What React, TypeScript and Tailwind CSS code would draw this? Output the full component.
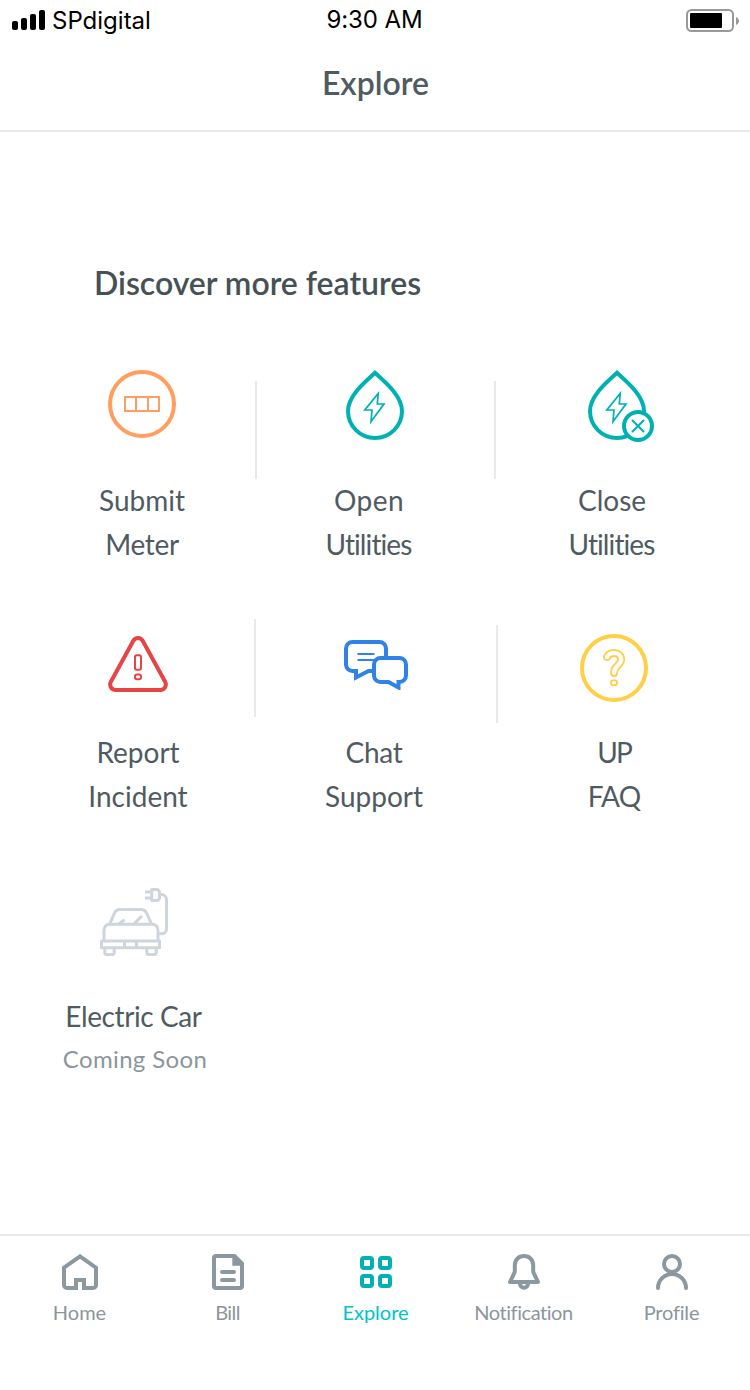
import type { ReactNode } from 'react';
import clsx from 'clsx';

interface LabelLine {
    text: string;
    className?: string;
}

interface FeatureProps {
    icon: ReactNode;
    iconClassName: string;
    lines: LabelLine[];
    className: string;
}

function MeterIcon() {
    return (
        <svg width="68" height="68" viewBox="0 0 68 68" fill="none" stroke="#ff9e5e">
            <circle cx="34" cy="34" r="32" strokeWidth="4" />
            <path d="M17 27h34v14H17zM28 27v14M40 27v14" strokeWidth="2" />
        </svg>
    );
}

function DropShape() {
    return (
        <>
            <path
                d="M29 2.8C21 10.500 2 25 2 41a27 27 0 0 0 54 0C56 25 37 10.500 29 2.800Z"
                strokeWidth="4"
            />
            <path d="M32.2 23.5 31.3 34H38L25 51.5 26 40H18.8Z" strokeWidth="1.7" />
        </>
    );
}

function DropIcon() {
    return (
        <svg width="58" height="70" viewBox="0 0 58 70" fill="none" stroke="#00b1b4">
            <DropShape />
        </svg>
    );
}

function DropCloseIcon() {
    return (
        <svg width="66" height="72" viewBox="0 0 66 72" fill="none" stroke="#00b1b4">
            <DropShape />
            <circle cx="50" cy="56" r="14" strokeWidth="4" fill="#fff" />
            <path d="m44.5 50.5 11 11M55.5 50.5l-11 11" strokeWidth="2" strokeLinecap="round" />
        </svg>
    );
}

function WarningIcon() {
    return (
        <svg width="60" height="56" viewBox="0 0 60 56" fill="none" stroke="#e64545">
            <path
                d="M25.2 5 3 45.5C.8 49.6 3.4 54 7.6 54h44.8c4.2 0 6.8-4.4 4.6-8.5L34.8 5c-2.2-4-7.4-4-9.6 0Z"
                strokeWidth="4"
            />
            <rect x="27" y="19.2" width="6" height="14.6" rx="1.8" strokeWidth="2" />
            <rect x="27" y="38.6" width="6" height="4.6" rx="2" strokeWidth="2" />
        </svg>
    );
}

function ChatIcon() {
    return (
        <svg width="64" height="50" viewBox="0 0 64 50" fill="none" stroke="#2f83e4" strokeWidth="4">
            <path d="M42 18V8.500a6.500 6.500 0 0 0-6.500-6.500H8.500A6.500 6.500 0 0 0 2 8.500v16A6.500 6.500 0 0 0 8.500 31H12v6.500L24.500 31H30" />
            <path d="M13.500 14h17M13.500 20H30" strokeWidth="2" />
            <path d="M36.500 18h19a6.500 6.500 0 0 1 6.500 6.500v11a6.500 6.500 0 0 1-6.500 6.500h-1v5.500L44.500 42h-8a6.500 6.500 0 0 1-6.500-6.500v-11a6.500 6.500 0 0 1 6.500-6.500Z" fill="#fff" />
        </svg>
    );
}

function QuestionIcon() {
    const hook = 'M27 23C28.500 20 31 19 34 19c4.400 0 7.200 2.700 7.200 6.500C41.200 31.500 34 31.500 34 39';
    return (
        <svg width="68" height="68" viewBox="0 0 68 68" fill="none" stroke="#ffcf48">
            <circle cx="34" cy="34" r="32" strokeWidth="4" />
            <g strokeLinecap="round">
                <path d={hook} strokeWidth="7.8" />
                <path d={hook} strokeWidth="4.2" stroke="#fff" />
            </g>
            <rect x="31" y="46.3" width="6" height="4.8" rx="2.2" strokeWidth="1.8" />
        </svg>
    );
}

function CarIcon() {
    return (
        <svg width="68" height="68" viewBox="0 0 68 68" fill="none" stroke="#ced5dd" strokeWidth="3" strokeLinejoin="round">
            <path d="M1.500 53h58v6.800h-58zM24.500 53v7M36.500 53v7" />
            <path d="M4.800 60v4.500a2 2 0 0 0 2 2h5.400a2 2 0 0 0 2-2V60M46.800 60v4.500a2 2 0 0 0 2 2h5.400a2 2 0 0 0 2-2V60" />
            <path d="M4 53V42.500c0-3.500 2-6.200 6-6.200h42c4 0 6 2.700 6 6.200V53" />
            <path d="M9.800 36 14 26c1.200-3 3-4.500 6-4.500h21c3 0 4.800 1.500 6 4.500l4.500 10" />
            <path d="m19.500 35.500 4-3M34.500 35.500l6.500-6.700" strokeLinecap="round" />
            <path d="M59 45.800h2.500a5 5 0 0 0 5-5V11.500a5 5 0 0 0-5-5H60" />
            <path d="M51.800 1.500h4.700a3 3 0 0 1 3 3v5a3 3 0 0 1-3 3h-4.700zM45 4h6M45 10h6" />
        </svg>
    );
}

function HomeIcon() {
    return (
        <svg width="36" height="36" viewBox="0 0 36 36" fill="none" stroke="#8b989f" strokeWidth="4">
            <path d="M2 13.700 18 2.400l16 11.300V31a3 3 0 0 1-3 3h-9v-8h-8v8H5a3 3 0 0 1-3-3Z" />
        </svg>
    );
}

function BillIcon() {
    return (
        <svg width="32" height="36" viewBox="0 0 32 36" fill="none" stroke="#8b989f" strokeWidth="4">
            <path d="M4 2h18.500L30 9.500V32a2 2 0 0 1-2 2H4a2 2 0 0 1-2-2V4a2 2 0 0 1 2-2Z" />
            <path d="M20.300 2v9.700H31L22.500 2Z" fill="#8b989f" stroke="none" />
            <path d="M10 18h12M10 26h12" strokeLinecap="round" />
        </svg>
    );
}

function GridIcon() {
    return (
        <svg width="32" height="36" viewBox="0 0 32 36" fill="none" stroke="#00b1b4" strokeWidth="4">
            <rect x="2" y="4" width="10" height="10" rx="2" />
            <rect x="20" y="4" width="10" height="10" rx="2" />
            <rect x="2" y="22" width="10" height="10" rx="2" />
            <rect x="20" y="22" width="10" height="10" rx="2" />
        </svg>
    );
}

function BellIcon() {
    return (
        <svg width="32" height="36" viewBox="0 0 32 36" fill="none" stroke="#8b989f" strokeWidth="4" strokeLinejoin="round">
            <path d="M16 2C10.500 2 6.800 6 6.800 11.500v5.300c0 1-.3 2-.8 2.900l-4 8.300h28l-4-8.300c-.5-.9-.8-1.900-.8-2.900v-5.300C25.200 6 21.500 2 16 2Z" />
            <path d="M12 28.500v1.200a4 4 0 0 0 8 0v-1.200" />
        </svg>
    );
}

function ProfileIcon() {
    return (
        <svg width="32" height="36" viewBox="0 0 32 36" fill="none" stroke="#8b989f" strokeWidth="4">
            <circle cx="16" cy="10" r="8" />
            <path d="M2 34a14 14 0 0 1 28 0" strokeLinecap="round" />
        </svg>
    );
}

function StatusBar() {
    return (
        <div className="grid h-10 grid-cols-3 items-start pt-1.5 pr-[11px] pl-3 font-['Inter',sans-serif] text-[24px] leading-7 text-black">
            <div className="flex">
                <svg width="33" height="20" viewBox="0 0 33 20" className="mt-1 mr-[7px]">
                    <rect x="0" y="11" width="6" height="9" rx="2" />
                    <rect x="9" y="8" width="6" height="12" rx="2" />
                    <rect x="18" y="4" width="6" height="16" rx="2" />
                    <rect x="27" y="0" width="6" height="20" rx="2" />
                </svg>
                <span className="mt-px">SPdigital</span>
            </div>
            <span className="pr-0.5 text-center tracking-[-0.1px]">9:30 AM</span>
            <svg width="53" height="24" viewBox="0 0 53 24" className="mt-[3px] justify-self-end">
                <rect x="1" y="1" width="46" height="21" rx="4.5" fill="none" stroke="#999" strokeWidth="2" />
                <rect x="4" y="4" width="32" height="15" rx="1" />
                <path d="M50 8c4 1.500 4 6.500 0 8Z" fill="#999" />
            </svg>
        </div>
    );
}

function Feature({ icon, iconClassName, lines, className }: FeatureProps) {
    return (
        <div className={clsx('flex shrink-0 flex-col items-center text-[28px]', className)}>
            <div className={clsx('flex items-start', iconClassName)}>{icon}</div>
            {lines.map((line) => (
                <span key={line.text} className={clsx('leading-[44px] whitespace-nowrap', line.className)}>
                    {line.text}
                </span>
            ))}
        </div>
    );
}

function Divider({ className }: { className: string }) {
    return <div className={clsx('h-[98px] w-0.5 shrink-0 bg-[#e6eaed]', className)} />;
}

const tabs = [
    { label: 'Home', icon: <HomeIcon /> },
    { label: 'Bill', icon: <BillIcon />, labelClassName: 'tracking-[-0.6px]' },
    { label: 'Explore', icon: <GridIcon />, active: true },
    { label: 'Notification', icon: <BellIcon />, labelClassName: 'tracking-[-0.45px]' },
    { label: 'Profile', icon: <ProfileIcon />, labelClassName: 'tracking-[-0.2px]' },
];

export default function App() {
    return (
        <div className="flex h-[1390px] w-[750px] flex-col overflow-hidden bg-white font-['Lato',sans-serif] text-[#4f5b62] [font-variant-ligatures:none]">
            <header className="h-[132px] border-b-2 border-[#e6eaed]">
                <StatusBar />
                <h1 className="mt-[21px] pl-px text-center text-[32px] leading-[44px] font-semibold">Explore</h1>
            </header>

            <main>
                <h2 className="mt-[129px] ml-[94px] text-[32px] leading-[44px] font-semibold tracking-[-0.03px] text-[#465156]">
                    Discover more features
                </h2>

                {/* Meter and utilities */}
                <section className="mt-[65px] flex items-start">
                    <Feature
                        className="ml-11 w-[196px]"
                        icon={<MeterIcon />}
                        iconClassName="h-[108px]"
                        lines={[{ text: 'Submit' }, { text: 'Meter', className: 'tracking-[-0.3px]' }]}
                    />
                    <Divider className="mt-[11px] ml-[15px]" />
                    <Feature
                        className="ml-5 w-[184px]"
                        icon={<DropIcon />}
                        iconClassName="h-[108px] pl-3"
                        lines={[
                            { text: 'Open', className: 'tracking-[0.4px]' },
                            { text: 'Utilities', className: 'tracking-[-0.9px] pr-px' },
                        ]}
                    />
                    <Divider className="mt-[11px] ml-[33px]" />
                    <Feature
                        className="w-[232px]"
                        icon={<DropCloseIcon />}
                        iconClassName="h-[108px] pl-[18px]"
                        lines={[{ text: 'Close' }, { text: 'Utilities', className: 'tracking-[-0.9px] pr-px' }]}
                    />
                </section>

                {/* Help and support */}
                <section className="mt-[53px] flex items-start">
                    <Feature
                        className="ml-11 w-[188px]"
                        icon={<WarningIcon />}
                        iconClassName="h-[111px] pt-[17px]"
                        lines={[{ text: 'Report' }, { text: 'Incident' }]}
                    />
                    <Divider className="ml-[22px]" />
                    <Feature
                        className="ml-5 w-[196px]"
                        icon={<ChatIcon />}
                        iconClassName="h-[111px] pt-[21px] pl-1"
                        lines={[{ text: 'Chat', className: 'tracking-[-0.3px]' }, { text: 'Support' }]}
                    />
                    <Divider className="mt-1.5 ml-6" />
                    <Feature
                        className="w-[232px]"
                        icon={<QuestionIcon />}
                        iconClassName="h-[111px] pt-[15px]"
                        lines={[
                            { text: 'UP', className: 'tracking-[-2px]' },
                            { text: 'FAQ', className: 'tracking-[-0.8px]' },
                        ]}
                    />
                </section>

                <section className="mt-[70px] flex items-start">
                    <Feature
                        className="ml-9 w-[196px]"
                        icon={<CarIcon />}
                        iconClassName="h-[106px]"
                        lines={[
                            { text: 'Electric Car', className: 'tracking-[-0.4px] pr-px' },
                            { text: 'Coming Soon', className: '-mt-px pl-0.5 text-[24px] text-[#8b969c] tracking-[0.35px]' },
                        ]}
                    />
                </section>
            </main>

            <nav className="mt-auto flex h-[156px] border-t-2 border-[#e6eaed] pt-[18px] pl-1.5">
                {tabs.map((tab) => (
                    <button key={tab.label} className="flex h-20 w-[148px] flex-col items-center">
                        {tab.icon}
                        <span
                            className={clsx(
                                'mt-2.5 pr-px text-[20px] leading-6 whitespace-nowrap',
                                tab.active ? 'text-[#00c3cb]' : 'text-[#8b969c]',
                                tab.labelClassName
                            )}
                        >
                            {tab.label}
                        </span>
                    </button>
                ))}
            </nav>
        </div>
    );
}
